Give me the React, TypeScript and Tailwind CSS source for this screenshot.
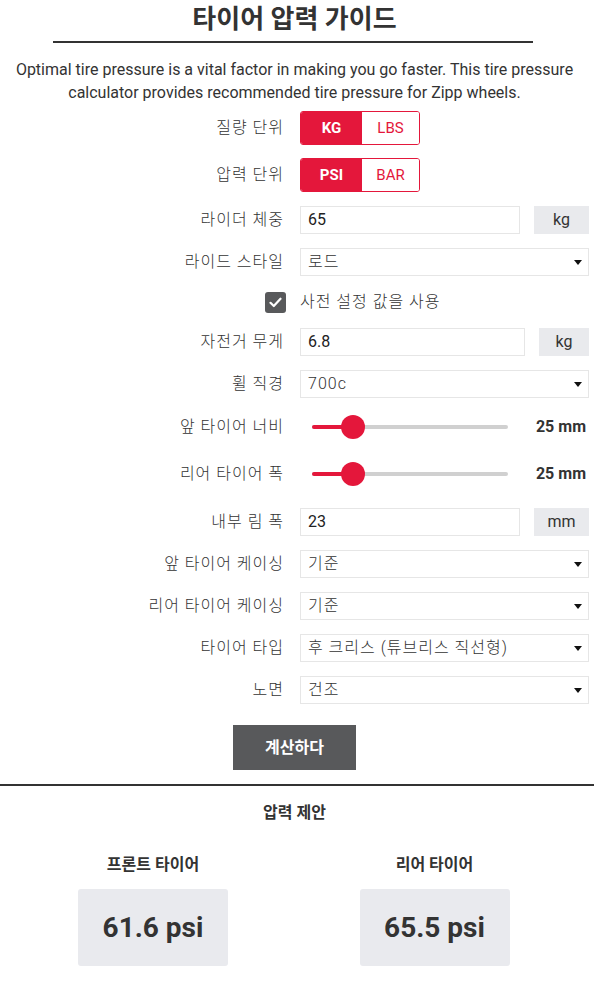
import { useState } from "react";

const font = { fontFamily: '"Roboto", "Noto Sans CJK KR", sans-serif' };

function Label({ children }: { children: React.ReactNode }) {
  return (
    <div className="w-[284px] shrink-0 text-right text-[16px] font-light tracking-[1px] text-[#333] whitespace-nowrap">
      {children}
    </div>
  );
}

function Toggle({ left, right }: { left: string; right: string }) {
  return (
    <div className="flex h-[34px] w-[120px] rounded-[3px] border border-[#e4173b] overflow-hidden text-[15px]">
      <div className="flex w-[61px] items-center justify-center bg-[#e4173b] font-bold text-white">
        {left}
      </div>
      <div className="flex flex-1 items-center justify-center bg-white text-[#e4173b]">
        {right}
      </div>
    </div>
  );
}

function Input({ value, unit, wide }: { value: string; unit: string; wide?: boolean }) {
  return (
    <div className="flex flex-1 items-center">
      <div
        className={`flex h-[28px] items-center border border-[#e6e6e6] px-[7px] text-[16px] text-[#222] ${
          wide ? "w-[225px]" : "w-[220px]"
        }`}
      >
        {value}
      </div>
      <div className="flex-1" />
      <div
        className={`flex h-[28px] items-center justify-center bg-[#e9eaed] text-[16px] text-[#333] ${
          wide ? "w-[50px]" : "w-[55px]"
        }`}
      >
        {unit}
      </div>
    </div>
  );
}

function Select({ value }: { value: string }) {
  return (
    <div className="flex h-[28px] w-[289px] items-center justify-between border border-[#e6e6e6] pl-[7px] pr-[6px] text-[16px] font-light tracking-[1px] text-[#333]">
      <span>{value}</span>
      <svg width="8" height="5" viewBox="0 0 8 5">
        <path d="M0 0h8L4 5z" fill="#111" />
      </svg>
    </div>
  );
}

function Slider({ pct }: { pct: number }) {
  return (
    <div className="flex flex-1 items-center">
      <div className="relative ml-[12px] h-[4px] w-[196px] rounded-full bg-[#d0d0d0]">
        <div className="h-full rounded-full bg-[#e4173b]" style={{ width: `${pct}%` }} />
        <div
          className="absolute top-1/2 h-[24px] w-[24px] -translate-x-1/2 -translate-y-1/2 rounded-full bg-[#e4173b]"
          style={{ left: `${pct}%` }}
        />
      </div>
      <div className="flex-1" />
      <div className="mr-[3px] text-[16px] font-bold text-[#333]">25 mm</div>
    </div>
  );
}

function Row({ children, className = "" }: { children: React.ReactNode; className?: string }) {
  return <div className={`flex items-center gap-4 ${className}`}>{children}</div>;
}

export default function App() {
  const [checked] = useState(true);

  return (
    <div className="min-h-screen bg-white" style={font}>
      <div className="w-[589px]">
        <h1 className="h-[41px] pt-[1px] text-center text-[26px] leading-[36px] font-bold text-[#333]">
          타이어 압력 가이드
        </h1>
        <div className="ml-[53px] h-[2px] w-[480px] bg-[#333]" />
        <p className="mt-[15px] px-[6px] text-center text-[16px] leading-[23px] text-[#333]">
          Optimal tire pressure is a vital factor in making you go faster. This tire pressure
          calculator provides recommended tire pressure for Zipp wheels.
        </p>

        <Row className="mt-[7px]">
          <Label>질량 단위</Label>
          <Toggle left="KG" right="LBS" />
        </Row>
        <Row className="mt-[13px]">
          <Label>압력 단위</Label>
          <Toggle left="PSI" right="BAR" />
        </Row>
        <Row className="mt-[14px]">
          <Label>라이더 체중</Label>
          <Input value="65" unit="kg" />
        </Row>
        <Row className="mt-[14px]">
          <Label>라이드 스타일</Label>
          <Select value="로드" />
        </Row>
        <div className="mt-[14px] flex h-[24px] items-center">
          <div className="ml-[265px] flex h-[21px] w-[21px] items-center justify-center rounded-[3px] bg-[#58595b]">
            {checked && (
              <svg width="13" height="11" viewBox="0 0 13 11">
                <path d="M1.5 5.8l3.3 3.2 6.7-7.3" fill="none" stroke="#fff" strokeWidth="2.2" strokeLinecap="round" strokeLinejoin="round" />
              </svg>
            )}
          </div>
          <span className="ml-[14px] text-[16px] font-light tracking-[1px] text-[#333]">사전 설정 값을 사용</span>
        </div>
        <Row className="mt-[14px]">
          <Label>자전거 무게</Label>
          <Input value="6.8" unit="kg" wide />
        </Row>
        <Row className="mt-[14px]">
          <Label>휠 직경</Label>
          <Select value="700c" />
        </Row>
        <Row className="mt-[15px] h-[28px]">
          <Label>앞 타이어 너비</Label>
          <Slider pct={21} />
        </Row>
        <Row className="mt-[19px] h-[28px]">
          <Label>리어 타이어 폭</Label>
          <Slider pct={21} />
        </Row>
        <Row className="mt-[20px]">
          <Label>내부 림 폭</Label>
          <Input value="23" unit="mm" />
        </Row>
        <Row className="mt-[14px]">
          <Label>앞 타이어 케이싱</Label>
          <Select value="기준" />
        </Row>
        <Row className="mt-[14px]">
          <Label>리어 타이어 케이싱</Label>
          <Select value="기준" />
        </Row>
        <Row className="mt-[14px]">
          <Label>타이어 타입</Label>
          <Select value="후 크리스 (튜브리스 직선형)" />
        </Row>
        <Row className="mt-[14px]">
          <Label>노면</Label>
          <Select value="건조" />
        </Row>

        <div className="mt-[21px] flex justify-center">
          <button className="h-[45px] w-[123px] bg-[#58595b] text-[16px] font-bold text-white">
            계산하다
          </button>
        </div>
      </div>

      <div className="mt-[14px] h-[2px] w-[594px] bg-[#333]" />

      <div className="w-[589px]">
        <div className="mt-[15px] text-center text-[16px] font-bold text-[#333]">압력 제안</div>
        <div className="mt-[28px] flex">
          <div className="flex w-[305px] flex-col items-center pl-[1px]">
            <div className="text-[16px] font-bold text-[#333]">프론트 타이어</div>
            <div className="mt-[12px] flex h-[77px] w-[150px] items-center justify-center rounded-[3px] bg-[#e9eaee] text-[28px] font-bold text-[#333]">
              61.6 psi
            </div>
          </div>
          <div className="flex w-[259px] flex-col items-center">
            <div className="text-[16px] font-bold text-[#333]">리어 타이어</div>
            <div className="mt-[12px] flex h-[77px] w-[150px] items-center justify-center rounded-[3px] bg-[#e9eaee] text-[28px] font-bold text-[#333]">
              65.5 psi
            </div>
          </div>
        </div>
      </div>
    </div>
  );
}
